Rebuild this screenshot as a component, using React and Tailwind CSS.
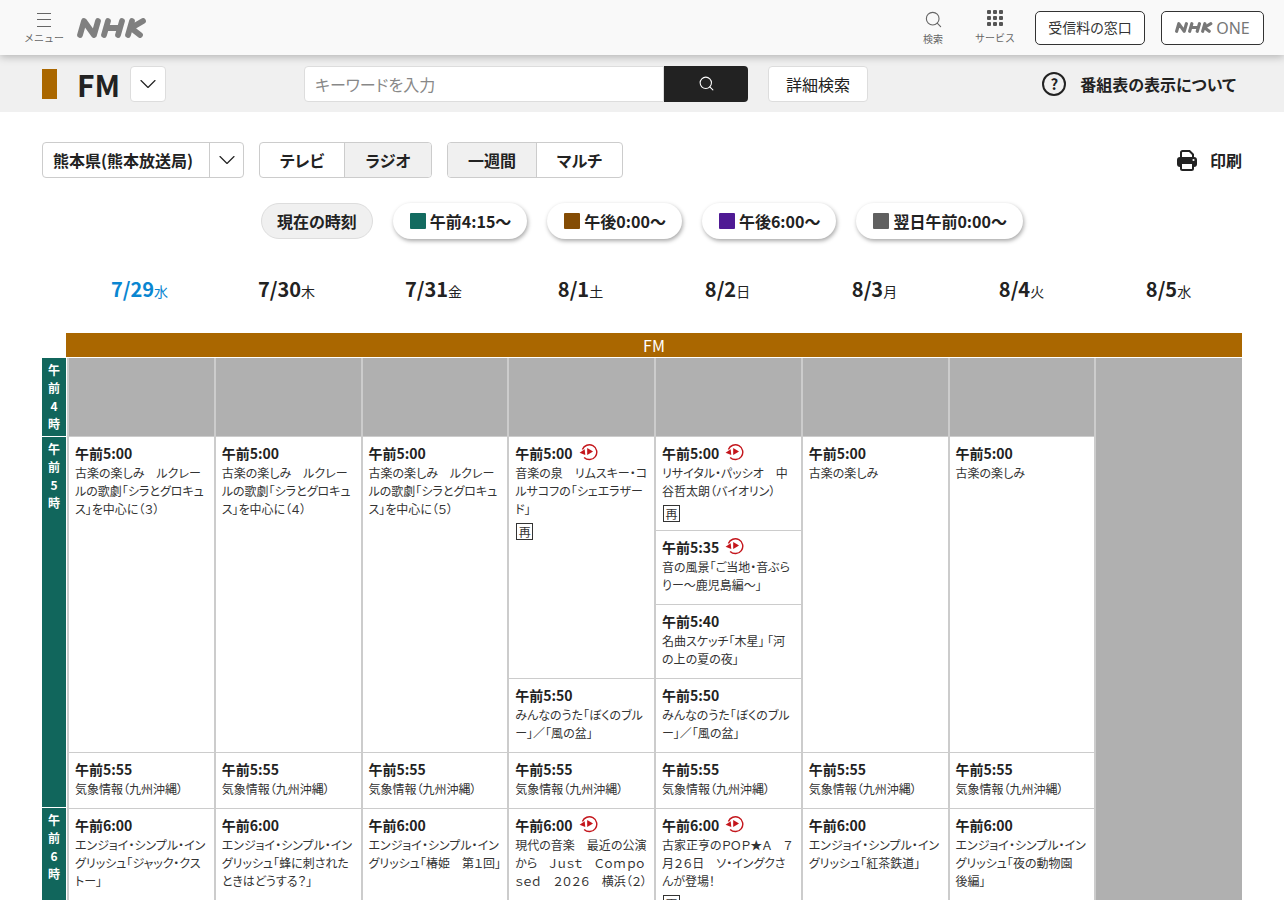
import React from 'react';
import { Search, ChevronDown } from 'lucide-react';

function NhkLogo({ className }) {
  return (
    <svg viewBox="0 0 70 20" className={className} fill="none" stroke="currentColor" strokeWidth="5.8" strokeLinecap="round" strokeLinejoin="round">
      <path d="M3 17 L7 3 L17 17 L21 3" />
      <path d="M31 3 L27 17 M45 3 L41 17 M29 10 L43 10" />
      <path d="M55 3 L51 17 M66 3 L54 10 L63 17" />
    </svg>
  );
}

function ReplayIcon() {
  return (
    <svg viewBox="0 0 20 20" className="-mt-[3px] w-[19px] h-[19px] text-[#c4161c]" fill="none">
      <path d="M3.6 8 A7.8 7.8 0 1 1 5.4 16.2" stroke="currentColor" strokeWidth="1.5" />
      <path d="M0.6 11.2 L6 7.6 L6.6 13.6 Z" fill="currentColor" />
      <path d="M8.6 6.2 L14.8 10 L8.6 13.8 Z" fill="currentColor" />
    </svg>
  );
}

function PrinterIcon() {
  return (
    <svg viewBox="0 0 20 21" className="w-[20px] h-[21px] text-[#222]">
      <path d="M4 8 V2.5 A1.5 1.5 0 0 1 5.5 1 H12.5 L16 4.5 V8" fill="none" stroke="currentColor" strokeWidth="2" />
      <rect x="0" y="7" width="20" height="10" rx="3" fill="currentColor" />
      <path d="M4 14 V18.5 A1.5 1.5 0 0 0 5.5 20 H14.5 A1.5 1.5 0 0 0 16 18.5 V14" fill="#fff" stroke="currentColor" strokeWidth="2" />
      <circle cx="16.5" cy="10" r="1.1" fill="#fff" />
    </svg>
  );
}

function Program({ time, desc, replay, re, h }) {
  return (
    <div style={{ height: h }} className="pl-[6px] pr-[6px] pt-[5px] overflow-hidden border-b border-[#ccc]">
      <div className="flex items-center gap-[6px] h-[22px] text-[14px] leading-[20px] font-bold text-[#222]">
        <span>{time}</span>
        {replay && <ReplayIcon />}
      </div>
      <p className="text-[12px] leading-[18px] text-[#333] break-all">{desc}</p>
      {re && (
        <span className="mt-[5px] ml-px flex items-center justify-center w-[17px] h-[17px] border border-[#333] text-[12px] leading-none text-[#333]">再</span>
      )}
    </div>
  );
}

const weather = { time: '午前5:55', desc: '気象情報（九州沖縄）', h: 56 };

const days = [
  ['7/29', '水'], ['7/30', '木'], ['7/31', '金'], ['8/1', '土'],
  ['8/2', '日'], ['8/3', '月'], ['8/4', '火'], ['8/5', '水'],
];

const columns = [
  [
    { time: '午前5:00', desc: '古楽の楽しみ　ルクレールの歌劇「シラとグロキュス」を中心に（３）', h: 316 },
    weather,
    { time: '午前6:00', desc: 'エンジョイ・シンプル・イングリッシュ「ジャック・クストー」', h: 130 },
  ],
  [
    { time: '午前5:00', desc: '古楽の楽しみ　ルクレールの歌劇「シラとグロキュス」を中心に（４）', h: 316 },
    weather,
    { time: '午前6:00', desc: 'エンジョイ・シンプル・イングリッシュ「蜂に刺されたときはどうする？」', h: 130 },
  ],
  [
    { time: '午前5:00', desc: '古楽の楽しみ　ルクレールの歌劇「シラとグロキュス」を中心に（５）', h: 316 },
    weather,
    { time: '午前6:00', desc: 'エンジョイ・シンプル・イングリッシュ「椿姫　第１回」', h: 130 },
  ],
  [
    { time: '午前5:00', desc: '音楽の泉　リムスキー・コルサコフの「シェエラザード」', replay: true, re: true, h: 242 },
    { time: '午前5:50', desc: 'みんなのうた「ぼくのブルー」／「風の盆」', h: 74 },
    weather,
    { time: '午前6:00', desc: '現代の音楽　最近の公演から　Ｊｕｓｔ　Ｃｏｍｐｏｓｅｄ　２０２６　横浜（２）', replay: true, h: 130 },
  ],
  [
    { time: '午前5:00', desc: 'リサイタル・パッシオ　中谷哲太朗（バイオリン）', replay: true, re: true, h: 94 },
    { time: '午前5:35', desc: '音の風景「ご当地・音ぶらりー～鹿児島編～」', replay: true, h: 74 },
    { time: '午前5:40', desc: '名曲スケッチ「木星」 「河の上の夏の夜」', h: 74 },
    { time: '午前5:50', desc: 'みんなのうた「ぼくのブルー」／「風の盆」', h: 74 },
    weather,
    { time: '午前6:00', desc: '古家正亨のＰＯＰ★Ａ　７月２６日　ソ・イングクさんが登場！', replay: true, re: true, h: 130 },
  ],
  [
    { time: '午前5:00', desc: '古楽の楽しみ', h: 316 },
    weather,
    { time: '午前6:00', desc: 'エンジョイ・シンプル・イングリッシュ「紅茶鉄道」', h: 130 },
  ],
  [
    { time: '午前5:00', desc: '古楽の楽しみ', h: 316 },
    weather,
    { time: '午前6:00', desc: 'エンジョイ・シンプル・イングリッシュ「夜の動物園　後編」', h: 130 },
  ],
];

const pills = [
  ['bg-[#136b60]', '午前4:15～'],
  ['bg-[#844c04]', '午後0:00～'],
  ['bg-[#4f1a94]', '午後6:00～'],
  ['bg-[#606060]', '翌日午前0:00～'],
];

const hours = [
  { label: ['午', '前', '4', '時'], h: 78 },
  { label: ['午', '前', '5', '時'], h: 370 },
  { label: ['午', '前', '6', '時'], h: 130 },
];

export default function App() {
  return (
    <div className="h-[900px] overflow-hidden bg-white text-[#222] [font-family:'Noto_Sans_CJK_JP','Noto_Sans',sans-serif] [font-feature-settings:'palt']">
      {/* global header */}
      <header className="relative z-10 h-[55px] bg-[#f9f9f9] shadow-[0_2px_8px_rgba(0,0,0,0.25)] flex items-center pl-[24px] pr-[20px]">
        <button className="w-[40px] flex flex-col items-center text-[#666]">
          <span className="flex flex-col gap-[5.5px] mt-[2px] mb-[4px] w-[14px]">
            <i className="block h-px bg-[#666]" />
            <i className="block h-px bg-[#666]" />
            <i className="block h-px bg-[#666]" />
          </span>
          <span className="text-[10px] leading-[14px] whitespace-nowrap [font-feature-settings:normal]">メニュー</span>
        </button>
        <NhkLogo className="ml-[13px] w-[70px] h-[20px] text-[#808080]" />
        <div className="ml-auto flex items-center">
          <button className="flex flex-col items-center w-[30px] text-[#666]">
            <Search className="w-[19px] h-[19px]" strokeWidth={1.4} />
            <span className="mt-[3px] text-[10px] leading-[14px] [font-feature-settings:normal]">検索</span>
          </button>
          <button className="ml-[27px] flex flex-col items-center w-[40px] text-[#666]">
            <span className="grid grid-cols-3 gap-[2px] w-[16px] h-[16px]">
              {[...Array(9)].map((_, i) => <i key={i} className="block bg-[#555] rounded-[1px]" />)}
            </span>
            <span className="mt-[5px] text-[10px] leading-[14px] whitespace-nowrap [font-feature-settings:normal]">サービス</span>
          </button>
          <button className="ml-[20px] w-[110px] h-[34px] bg-white border border-[#333] rounded-[5px] text-[14px] text-[#333]">受信料の窓口</button>
          <button className="ml-[16px] w-[103px] h-[34px] bg-white border border-[#333] rounded-[5px] flex items-center justify-center gap-[3px]">
            <NhkLogo className="w-[38px] h-[11px] text-[#777]" />
            <span className="text-[16px] text-[#777] [font-family:'Noto_Sans',sans-serif]">ONE</span>
          </button>
        </div>
      </header>

      {/* channel bar */}
      <div className="h-[57px] bg-[#f0f0f0] flex items-center pl-[42px] pr-[48px]">
        <span className="w-[15px] h-[30px] bg-[#aa6700]" />
        <h1 className="ml-[20px] w-[42px] text-[30px] font-bold leading-none">FM</h1>
        <button className="ml-[11px] w-[36px] h-[36px] bg-white border border-[#ddd] rounded-[4px] flex items-center justify-center">
          <ChevronDown className="w-[28px] h-[28px]" strokeWidth={1} />
        </button>
        <div className="ml-[138px] flex h-[36px]">
          <div className="w-[360px] bg-white border border-[#ddd] rounded-l-[4px] pl-[10px] text-[16px] leading-[34px] text-[#888]">キーワードを入力</div>
          <button className="w-[84px] bg-[#222] rounded-r-[4px] flex items-center justify-center">
            <Search className="w-[17px] h-[17px] text-white" strokeWidth={1.5} />
          </button>
        </div>
        <button className="ml-[20px] w-[100px] h-[36px] bg-white border border-[#ddd] rounded-[4px] text-[16px]">詳細検索</button>
        <div className="ml-auto flex items-center gap-[14px]">
          <span className="w-[24px] h-[24px] rounded-full border-2 border-[#222] flex items-center justify-center text-[15px] font-bold leading-none">?</span>
          <span className="text-[16px] font-bold">番組表の表示について</span>
        </div>
      </div>

      {/* area + tabs */}
      <div className="mt-[30px] px-[42px] flex items-center h-[36px]">
        <div className="w-[202px] h-[36px] flex border border-[#ccc] rounded-[4px] bg-white">
          <span className="flex-1 pl-[10px] text-[16px] font-bold leading-[34px] border-r border-[#ccc] whitespace-nowrap">熊本県(熊本放送局)</span>
          <span className="w-[33px] flex items-center justify-center">
            <ChevronDown className="w-[28px] h-[28px]" strokeWidth={1} />
          </span>
        </div>
        <div className="ml-[15px] flex h-[36px] border border-[#ccc] rounded-[4px] overflow-hidden text-[16px] font-bold">
          <span className="w-[85px] flex items-center justify-center border-r border-[#ccc]">テレビ</span>
          <span className="w-[86px] flex items-center justify-center bg-[#f0f0f0]">ラジオ</span>
        </div>
        <div className="ml-[15px] flex h-[36px] border border-[#ccc] rounded-[4px] overflow-hidden text-[16px] font-bold">
          <span className="w-[89px] flex items-center justify-center bg-[#f0f0f0] border-r border-[#ccc]">一週間</span>
          <span className="w-[85px] flex items-center justify-center">マルチ</span>
        </div>
        <div className="ml-auto flex items-center gap-[13px] text-[16px] font-bold">
          <PrinterIcon />
          <span>印刷</span>
        </div>
      </div>

      {/* time jump */}
      <div className="mt-[25px] flex justify-center gap-[20px] h-[36px]">
        <button className="px-[15px] rounded-full bg-[#f0f0f0] border border-[#ddd] text-[16px] font-bold">現在の時刻</button>
        {pills.map(([color, label]) => (
          <button key={label} className="pl-[17px] pr-[16px] rounded-full bg-white shadow-[1px_2px_4px_rgba(0,0,0,0.35)] flex items-center gap-[4px] text-[16px] font-bold">
            <span className={'w-[16px] h-[16px] rounded-[1px] ' + color} />
            {label}
          </button>
        ))}
      </div>

      {/* dates */}
      <div className="ml-[66px] mr-[42px] mt-[35px] grid grid-cols-8 h-[30px]">
        {days.map(([d, w], i) => (
          <div key={d} className={'flex items-baseline justify-center ' + (i === 0 ? 'text-[#0a86d1]' : 'text-[#222]')}>
            <span className="text-[20px] font-bold leading-[30px]">{d}</span>
            <span className="text-[14px]">{w}</span>
          </div>
        ))}
      </div>

      <div className="ml-[66px] mr-[42px] mt-[29px] h-[24px] bg-[#aa6700] text-white text-[16px] leading-[25px] text-center">FM</div>

      {/* timetable */}
      <div className="mt-px ml-[42px] mr-[42px] flex">
        <div className="w-[24px] shrink-0 flex flex-col gap-px">
          {hours.map((hour, i) => (
            <div key={i} style={{ height: hour.h }} className="bg-[#11665c] pt-[3px] flex flex-col items-center text-white text-[12px] font-bold leading-[18px]">
              {hour.label.map((c, j) => <span key={j}>{c}</span>)}
            </div>
          ))}
        </div>
        <div className="ml-px flex-1 grid grid-cols-[repeat(7,146.75px)_1fr]">
          {columns.map((col, i) => (
            <div key={i} className="border-l-2 border-[#ccc]">
              <div className="h-[79px] bg-[#b0b0b0] border-b border-[#ccc]" />
              {col.map((p, j) => <Program key={j} {...p} />)}
            </div>
          ))}
          <div className="border-l-2 border-[#ccc] bg-[#b0b0b0]" />
        </div>
      </div>
    </div>
  );
}
